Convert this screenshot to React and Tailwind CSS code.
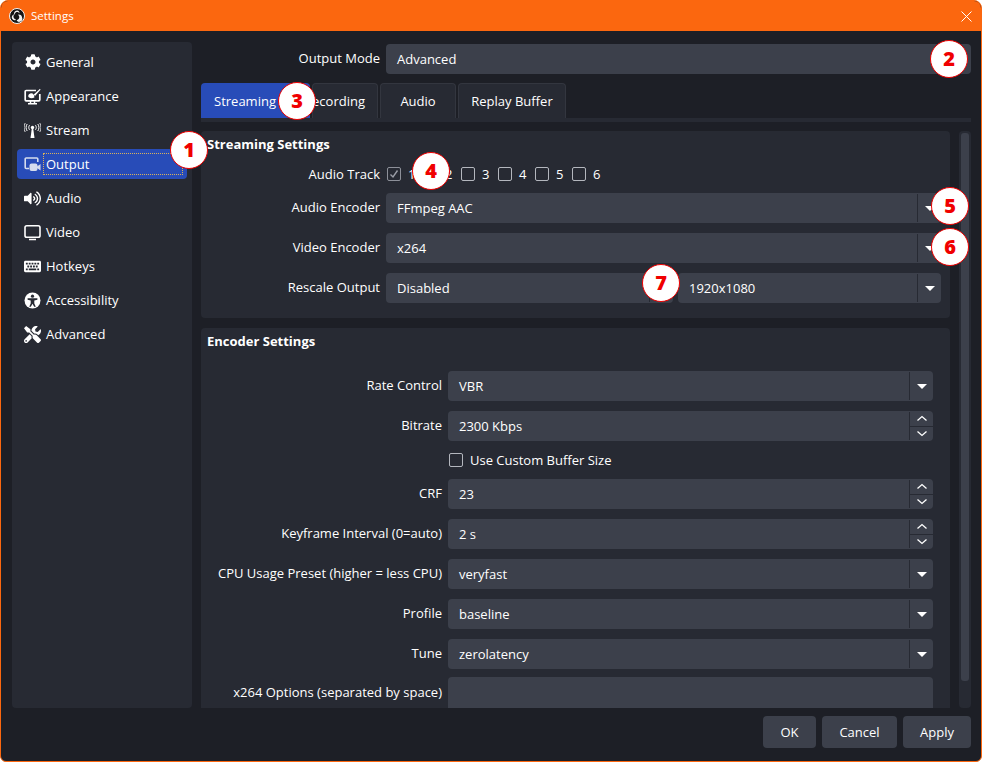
import { FaCog, FaVolumeUp, FaKeyboard, FaTools } from "react-icons/fa";

function AppearanceIcon() {
  return (
    <svg width="17" height="17" viewBox="0 0 17 17" fill="none">
      <path d="M12 2.500H2.200a1 1 0 0 0-1 1v8.300a1 1 0 0 0 1 1h12.600a1 1 0 0 0 1-1V6" stroke="white" strokeWidth="1.700" />
      <path d="M16 .8 9.800 6.600l1.200 1.300 5.500-6.200z" fill="white" />
      <path d="M5 6.200c1.500-1.400 3.600-1.100 4.600.2.800 1 .5 2.400 1 2.900-1.800 1.200-4.300 1.200-5.500.3C4 8.700 4 7.200 5 6.200z" fill="white" />
      <path d="M6.500 13v2M10.500 13v2M4 15.700h9" stroke="white" strokeWidth="1.500" />
    </svg>
  );
}

function StreamIcon() {
  return (
    <svg width="17" height="17" viewBox="0 0 17 17" fill="none" stroke="white">
      <circle cx="8.500" cy="5.500" r="1.700" fill="white" stroke="none" />
      <path d="M7.800 6.500h1.400L10.500 16h-4z" fill="white" stroke="none" />
      <path d="M5.500 3.200c-1 1.400-1 3.200 0 4.600M11.500 3.200c1 1.400 1 3.200 0 4.600" strokeWidth="1" />
      <path d="M3.200 2c-1.500 2.200-1.500 4.800 0 7M13.800 2c1.500 2.200 1.500 4.800 0 7" strokeWidth="1" />
      <path d="M1.200 1c-1.500 2.800-1.500 6.200 0 9M15.800 1c1.500 2.800 1.500 6.200 0 9" strokeWidth=".8" />
    </svg>
  );
}

function OutputIcon() {
  return (
    <svg width="17" height="17" viewBox="0 0 17 17" fill="none">
      <path d="M5 12.500H2.200a1 1 0 0 1-1-1V3a1 1 0 0 1 1-1h10.600a1 1 0 0 1 1 1v3" stroke="#d5dcee" strokeWidth="1.600" />
      <rect x="5.500" y="7.500" width="8" height="7.500" rx="2" fill="#d5dcee" />
      <path d="M13 10.500 16.500 8v6.500L13 12z" fill="#d5dcee" />
    </svg>
  );
}

function VideoIcon() {
  return (
    <svg width="17" height="17" viewBox="0 0 17 17" fill="none">
      <rect x="1" y="1.800" width="15" height="11.500" rx="1.800" stroke="white" strokeWidth="1.600" />
      <path d="M5 15.500h7" stroke="white" strokeWidth="1.600" />
    </svg>
  );
}

function AccessIcon() {
  return (
    <svg width="17" height="17" viewBox="0 0 17 17">
      <circle cx="8.500" cy="8.500" r="8" fill="white" />
      <circle cx="8.500" cy="4.200" r="1.600" fill="#272a33" />
      <path d="M3.600 6.200h9.800v1.500L10.300 8.500v3l1.500 3.300h-1.600L8.500 11.800l-1.700 3H5.200l1.500-3.300v-3L3.600 7.700z" fill="#272a33" />
    </svg>
  );
}

function ObsLogo() {
  return (
    <svg width="16" height="16" viewBox="0 0 16 16">
      <circle cx="8" cy="8" r="7.500" fill="#151515" stroke="#f2f2f2" strokeWidth="1" />
      <path d="M8 2.500a3 3 0 0 0-2.600 4.500A3.300 3.300 0 0 1 7 4.300c1.200-.5 3 0 3.600 1.300A3 3 0 0 0 8 2.500z" fill="#f2f2f2" />
      <path d="M13 9.500a3 3 0 0 0-4-2.800 3.300 3.300 0 0 1 1.300 2.900c-.2 1.300-1.300 2.500-2.700 2.600A3 3 0 0 0 13 9.500z" fill="#f2f2f2" />
      <path d="M3 10.500a3 3 0 0 0 4.200 1.200 3.300 3.300 0 0 1-2.500-1.900c-.5-1.200-.2-2.700.8-3.500A3 3 0 0 0 3 10.500z" fill="#f2f2f2" />
    </svg>
  );
}

function Arrow() {
  return <div className="w-0 h-0 border-l-[5px] border-r-[5px] border-t-[5px] border-l-transparent border-r-transparent border-t-white" />;
}

function Chevron({ flip }) {
  return (
    <svg width="12" height="7" viewBox="0 0 12 7" fill="none" className={flip ? "rotate-180" : ""}>
      <path d="M1.500 5.500 6 1.500l4.500 4" stroke="white" strokeWidth="1.300" />
    </svg>
  );
}

function Combo({ text, className = "" }) {
  return (
    <div className={`h-[30px] rounded-[4px] bg-[#3c404b] flex items-center ${className}`}>
      <span className="flex-1 pl-[11px]">{text}</span>
      <div className="w-[24px] h-[28px] border-l border-[#272a33] flex items-center justify-center">
        <Arrow />
      </div>
    </div>
  );
}

function Spin({ text }) {
  return (
    <div className="h-[30px] rounded-[4px] bg-[#3c404b] flex items-center">
      <span className="flex-1 pl-[11px]">{text}</span>
      <div className="w-[24px] h-[28px] border-l border-[#272a33] flex flex-col">
        <div className="flex-1 flex items-center justify-center border-b border-[#272a33]">
          <Chevron />
        </div>
        <div className="flex-1 flex items-center justify-center">
          <Chevron flip />
        </div>
      </div>
    </div>
  );
}

function Check({ checked }) {
  return (
    <div className={`w-[14px] h-[14px] rounded-[2px] border flex items-center justify-center shrink-0 ${checked ? "border-[#8d9099]" : "border-[#b4b7be]"}`}>
      {checked && (
        <svg width="10" height="10" viewBox="0 0 10 10" fill="none">
          <path d="M1.500 5.500 4 8l4.500-6.500" stroke="#9a9da6" strokeWidth="1.400" />
        </svg>
      )}
    </div>
  );
}

function Row({ label, labelWidth, children }) {
  return (
    <div className="flex items-center gap-[6px]">
      <div className="text-right shrink-0 pb-[2px]" style={{ width: labelWidth }}>{label}</div>
      <div className="flex-1 min-w-0">{children}</div>
    </div>
  );
}

const navItems = [
  { label: "General", icon: <FaCog size={16} color="white" /> },
  { label: "Appearance", icon: <AppearanceIcon /> },
  { label: "Stream", icon: <StreamIcon /> },
  { label: "Output", icon: <OutputIcon />, active: true },
  { label: "Audio", icon: <FaVolumeUp size={17} color="white" /> },
  { label: "Video", icon: <VideoIcon /> },
  { label: "Hotkeys", icon: <FaKeyboard size={17} color="white" /> },
  { label: "Accessibility", icon: <AccessIcon /> },
  { label: "Advanced", icon: <FaTools size={17} color="white" /> },
];

const badges = [
  { n: 1, pos: "left-[169px] top-[130px]" },
  { n: 2, pos: "left-[929px] top-[39px]" },
  { n: 3, pos: "left-[277px] top-[81px]" },
  { n: 4, pos: "left-[411px] top-[151px]" },
  { n: 5, pos: "left-[930px] top-[186px]" },
  { n: 6, pos: "left-[930px] top-[227px]" },
  { n: 7, pos: "left-[641px] top-[263px]" },
];

export default function App() {
  return (
    <div className="relative w-[982px] h-[762px] bg-[#1d1f26] border border-[#fb670f] rounded-t-lg rounded-b-md overflow-hidden flex flex-col text-white text-[13px] leading-[18px] font-['Open_Sans',sans-serif]">
      <div className="h-[30px] bg-[#fb670f] flex items-center shrink-0">
        <div className="ml-[8px] mr-[6px] flex"><ObsLogo /></div>
        <span className="text-[11.5px]">Settings</span>
        <svg width="11" height="11" viewBox="0 0 11 11" className="ml-auto mr-[9px]" fill="none">
          <path d="M.5.5l10 10M10.500.500l-10 10" stroke="white" strokeWidth="1" />
        </svg>
      </div>

      <div className="flex-1 min-h-0 flex flex-col pt-[11px] pl-[11px] pr-[10px] pb-[13px]">
        <div className="flex-1 min-h-0 flex gap-[9px]">
          {/* sidebar */}
          <div className="w-[180px] shrink-0 bg-[#272a33] rounded-[4px] pt-[5px] px-[5px] flex flex-col gap-[4px]">
            {navItems.map((item) => (
              <div
                key={item.label}
                className={`h-[30px] rounded-[4px] flex items-center pl-[7px] pr-[4px] ${item.active ? "bg-[#284cb8]" : ""}`}
              >
                <div className="w-[17px] flex justify-center shrink-0">{item.icon}</div>
                {item.active ? (
                  <div className="ml-[2px] pl-[2px] flex-1 h-[22px] flex items-center border border-dotted border-[#d9b25c]">{item.label}</div>
                ) : (
                  <span className="ml-[5px]">{item.label}</span>
                )}
              </div>
            ))}
          </div>

          {/* right side */}
          <div className="flex-1 min-w-0 flex flex-col pt-[2px]">
            <div className="flex items-center gap-[6px] h-[30px] shrink-0">
              <div className="w-[179px] text-right pb-[2px]">Output Mode</div>
              <div className="flex-1 h-[30px] bg-[#3c404b] rounded-[4px] flex items-center pl-[11px]">Advanced</div>
            </div>

            <div className="mt-[9px] flex gap-[2px] shrink-0">
              <div className="w-[109px] h-[35px] rounded-t-[4px] bg-[#284cb8] pl-[13px] flex items-center">Streaming</div>
              <div className="w-[66px] h-[35px] rounded-t-[4px] bg-[#272a33] border border-b-0 border-[#33363f] flex items-center justify-end pr-[12px]">Recording</div>
              <div className="w-[76px] h-[35px] rounded-t-[4px] bg-[#272a33] border border-b-0 border-[#33363f] flex items-center justify-center">Audio</div>
              <div className="w-[108px] h-[35px] rounded-t-[4px] bg-[#272a33] border border-b-0 border-[#33363f] flex items-center justify-center">Replay Buffer</div>
            </div>
            <div className="h-[4px] bg-[#272a33] shrink-0" />

            <div className="mt-[9px] flex-1 min-h-0 flex justify-between">
              <div className="w-[749px] overflow-hidden flex flex-col gap-[10px]">
                <div className="bg-[#272a33] rounded-[4px] pt-[4px] pl-[6px] pr-[9px] pb-[15px] shrink-0">
                  <div className="font-bold">Streaming Settings</div>
                  <div className="mt-[12px] flex items-center gap-[6px] h-[18px]">
                    <div className="w-[173px] text-right">Audio Track</div>
                    <div className="flex gap-[15px] pl-[1px]">
                      {[1, 2, 3, 4, 5, 6].map((n) => (
                        <div key={n} className="flex items-center gap-[7px] w-[22px]">
                          <Check checked={n === 1} />
                          <span>{n}</span>
                        </div>
                      ))}
                    </div>
                  </div>
                  <div className="mt-[10px] flex flex-col gap-[10px]">
                    <Row label="Audio Encoder" labelWidth={173}><Combo text="FFmpeg AAC" /></Row>
                    <Row label="Video Encoder" labelWidth={173}><Combo text="x264" /></Row>
                    <Row label="Rescale Output" labelWidth={173}>
                      <div className="flex gap-[5px]">
                        <Combo text="Disabled" className="w-[287px]" />
                        <Combo text="1920x1080" className="flex-1" />
                      </div>
                    </Row>
                  </div>
                </div>

                <div className="bg-[#272a33] rounded-t-[4px] pt-[4px] pl-[6px] pr-[17px] shrink-0">
                  <div className="font-bold">Encoder Settings</div>
                  <div className="mt-[21px] flex flex-col gap-[10px]">
                    <Row label="Rate Control" labelWidth={235}><Combo text="VBR" /></Row>
                    <Row label="Bitrate" labelWidth={235}><Spin text="2300 Kbps" /></Row>
                    <div className="pl-[242px] flex items-center gap-[7px] h-[18px]">
                      <Check />
                      <span>Use Custom Buffer Size</span>
                    </div>
                    <Row label="CRF" labelWidth={235}><Spin text="23" /></Row>
                    <Row label="Keyframe Interval (0=auto)" labelWidth={235}><Spin text="2 s" /></Row>
                    <Row label="CPU Usage Preset (higher = less CPU)" labelWidth={235}><Combo text="veryfast" /></Row>
                    <Row label="Profile" labelWidth={235}><Combo text="baseline" /></Row>
                    <Row label="Tune" labelWidth={235}><Combo text="zerolatency" /></Row>
                    <div className="-mt-[2px] flex items-start gap-[6px]">
                      <div className="w-[235px] text-right shrink-0 pt-[6px]">x264 Options (separated by space)</div>
                      <div className="flex-1 h-[60px] bg-[#3c404b] rounded-[4px]" />
                    </div>
                  </div>
                </div>
              </div>

              {/* scrollbar */}
              <div className="w-[12px] bg-[#272a33] rounded-[4px] p-[2px] flex">
                <div className="w-full h-[548px] bg-[#3c404b] rounded-[3px]" />
              </div>
            </div>
          </div>
        </div>

        <div className="mt-[8px] flex justify-end gap-[6px] shrink-0">
          <div className="w-[53px] h-[32px] rounded-[4px] bg-[#3c404b] flex items-center justify-center">OK</div>
          <div className="w-[75px] h-[32px] rounded-[4px] bg-[#3c404b] flex items-center justify-center">Cancel</div>
          <div className="w-[68px] h-[32px] rounded-[4px] bg-[#3c404b] flex items-center justify-center">Apply</div>
        </div>
      </div>

      {badges.map((b) => (
        <div
          key={b.n}
          className={`absolute w-[38px] h-[38px] rounded-full bg-white border-[1.5px] border-[#f00000] flex items-center justify-center text-[#f00000] text-[20px] font-extrabold ${b.pos}`}
        >
          {b.n}
        </div>
      ))}
    </div>
  );
}
